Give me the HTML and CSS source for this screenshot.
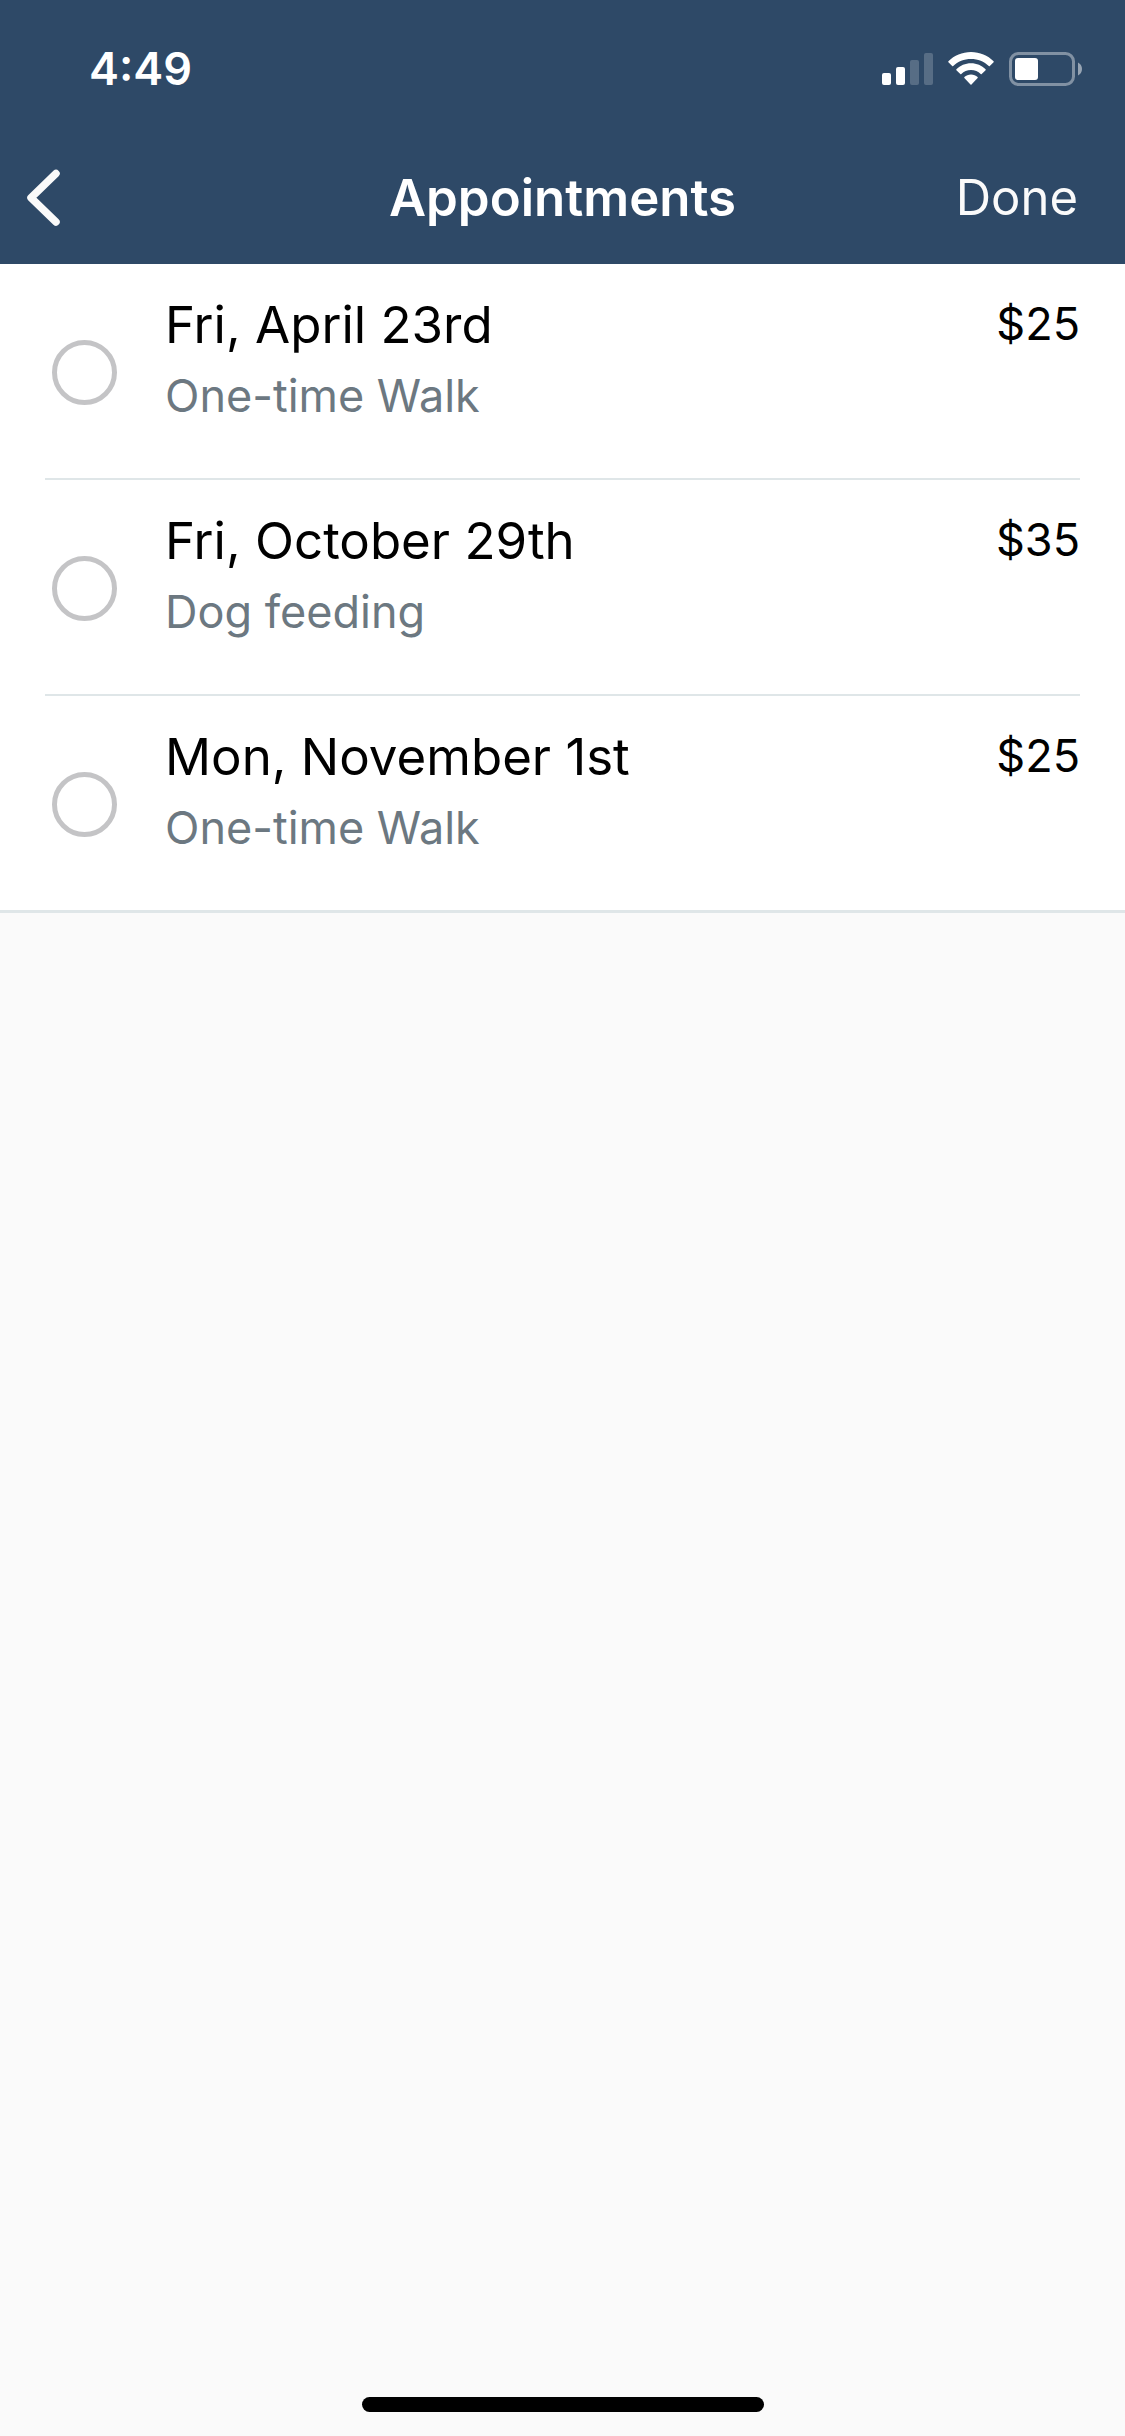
FILE: index.html
```html
<!DOCTYPE html>
<html lang="en">
<head>
  <meta charset="utf-8">
  <meta name="viewport" content="width=device-width, initial-scale=1">
  <title>Appointments</title>
  <link rel="stylesheet" href="styles.css">
</head>
<body>
  <div class="screen">
    <header class="header">
      <div class="status-bar">
        <time class="clock">4:49</time>
        <div class="status-icons">
          <svg width="51" height="34" viewBox="0 0 51 34" fill="#fff" role="img" aria-label="Signal">
            <rect x="0" y="21" width="9" height="12" rx="2"/>
            <rect x="14" y="15" width="9" height="18" rx="2"/>
            <rect x="28" y="8" width="9" height="25" rx="2" opacity=".2"/>
            <rect x="42" y="1" width="9" height="32" rx="2" opacity=".2"/>
          </svg>
          <svg width="46" height="34" viewBox="0 0 46 34" fill="#fff" role="img" aria-label="Wi-Fi">
            <path d="M23 0C14.200 0 6.200 3.500.400 9.200Q0 9.700.400 10.200L4.200 14Q4.700 14.400 5.200 14C9.800 9.600 16.100 7 23 7S36.200 9.600 40.800 14Q41.300 14.400 41.800 14L45.600 10.200Q46 9.700 45.600 9.200C39.800 3.500 31.800 0 23 0Z"/>
            <path d="M23 11.200C17.300 11.200 12.200 13.500 8.400 17.200Q8 17.700 8.400 18.200L12.300 22Q12.800 22.400 13.300 22C15.800 19.500 19.200 18 23 18S30.200 19.500 32.700 22Q33.200 22.400 33.700 22L37.600 18.200Q38 17.700 37.600 17.200C33.800 13.500 28.700 11.200 23 11.200Z"/>
            <path d="M23 22.500C20.400 22.500 18.100 23.500 16.400 25.100Q16 25.600 16.400 26.100L22.500 32.600Q23 33.100 23.500 32.600L29.600 26.100Q30 25.600 29.600 25.100C27.900 23.500 25.600 22.500 23 22.500Z"/>
          </svg>
          <svg width="73" height="34" viewBox="0 0 73 34" fill="#fff" role="img" aria-label="Battery">
            <rect x="1.500" y="1.500" width="63" height="31" rx="8" fill="none" stroke="#fff" stroke-width="3" opacity=".4"/>
            <rect x="6" y="6" width="23" height="22" rx="3"/>
            <path d="M69 10.500C71.500 11.800 73 14 73 17S71.500 22.200 69 23.500Z" opacity=".5"/>
          </svg>
        </div>
      </div>
      <nav class="nav-bar">
        <button class="back" type="button" aria-label="Back">
          <svg width="34" height="58" viewBox="0 0 34 58" fill="none" stroke="#fafafa" stroke-width="7.500" stroke-linecap="round" stroke-linejoin="round">
            <path d="M29 4.500 4 28.800 29 53"/>
          </svg>
        </button>
        <h1 class="title">Appointments</h1>
        <button class="done" type="button">Done</button>
      </nav>
    </header>

    <main>
      <ul class="list">
        <li class="item">
          <label class="row">
            <input class="check" type="checkbox">
            <span class="details">
              <span class="date">Fri, April 23rd</span>
              <span class="service">One-time Walk</span>
            </span>
            <span class="price">$25</span>
          </label>
        </li>
        <li class="item">
          <label class="row">
            <input class="check" type="checkbox">
            <span class="details">
              <span class="date">Fri, October 29th</span>
              <span class="service">Dog feeding</span>
            </span>
            <span class="price">$35</span>
          </label>
        </li>
        <li class="item">
          <label class="row">
            <input class="check" type="checkbox">
            <span class="details">
              <span class="date">Mon, November 1st</span>
              <span class="service">One-time Walk</span>
            </span>
            <span class="price">$25</span>
          </label>
        </li>
      </ul>
    </main>

    <div class="home-indicator"></div>
  </div>
</body>
</html>
```

FILE: styles.css
```css
* {
  box-sizing: border-box;
}

body {
  margin: 0;
  background: #fafafa;
  color: #000;
  font-family: Inter, "Liberation Sans", sans-serif;
}

.screen {
  display: flex;
  flex-direction: column;
  min-height: 100vh;
}

.header {
  background: #2e4967;
  color: #fff;
}

.status-bar {
  display: flex;
  align-items: center;
  justify-content: space-between;
  min-height: 132px;
  padding: 6px 43px 0 89px;
}

.clock {
  font-size: 45px;
  font-weight: 600;
  line-height: 56px;
}

.status-icons {
  display: flex;
  gap: 15px;
}

.status-icons svg,
.back svg {
  display: block;
}

.nav-bar {
  display: grid;
  grid-template-columns: 1fr auto 1fr;
  align-items: center;
  min-height: 132px;
  padding: 0 27px;
}

.back,
.done {
  padding: 0;
  border: 0;
  background: none;
  color: #fafafa;
  font: inherit;
  font-size: 49px;
  line-height: 58px;
}

.back {
  justify-self: start;
}

.done {
  justify-self: end;
  padding-right: 20px;
}

.title {
  margin: 0;
  font-size: 51px;
  font-weight: 600;
  line-height: 58px;
}

.list {
  margin: 0;
  padding: 0;
  border-bottom: 3px solid #dfe6e8;
  background: #fff;
  list-style: none;
}

.item {
  padding: 0 45px;
}

.row {
  display: flex;
  align-items: flex-start;
  min-height: 214px;
  padding: 32px 0 30px;
}

.item + .item .row {
  border-top: 2px solid #dfe6e8;
  min-height: 216px;
}

.check {
  flex: none;
  align-self: center;
  width: 65px;
  height: 65px;
  margin: 0 48px 0 7px;
  border: 5px solid #c4c4c6;
  border-radius: 50%;
  appearance: none;
}

.check:checked {
  background: #2e4967;
}

.details {
  display: flex;
  flex: 1;
  flex-direction: column;
  gap: 14px;
}

.date {
  font-size: 51px;
  line-height: 58px;
}

.service {
  color: #6c7881;
  font-size: 45px;
  line-height: 56px;
}

.price {
  font-size: 45px;
  line-height: 56px;
}

.home-indicator {
  width: 402px;
  height: 15px;
  margin: auto auto 24px;
  border-radius: 8px;
  background: #000;
}
```
